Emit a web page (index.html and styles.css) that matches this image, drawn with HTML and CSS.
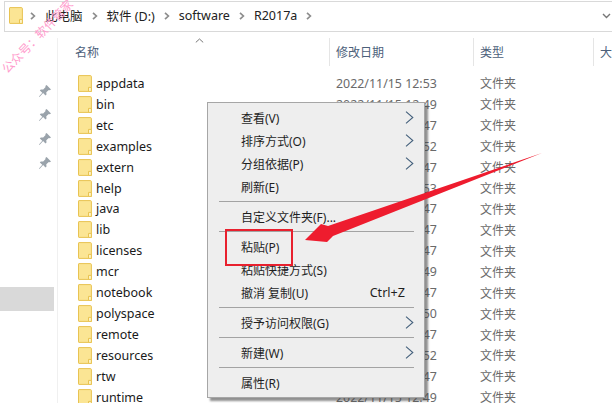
FILE: index.html
```html
<!DOCTYPE html>
<html lang="zh-CN">
<head>
<meta charset="utf-8">
<title>R2017a</title>
<link rel="stylesheet" href="styles.css">
</head>
<body>
<svg class="defs" width="0" height="0" aria-hidden="true">
  <symbol id="folder" viewBox="0 0 14 17">
    <path d="M1 .6h11.4c.6 0 1 .4 1 1V16.4H1c-.3 0-.5-.2-.5-.5V1.1c0-.3.2-.5.5-.5z" fill="#fbe594" stroke="#e8c352"/>
    <path d="M10.5 16.4v-4h2.9v4z" fill="#fdf3c6" stroke="#e8c352"/>
  </symbol>
  <symbol id="pin" viewBox="0 0 14 14">
    <path d="M8.6 1 13 5.4l-1.2.9-1-.4-2.5 2.4.2 2.3-1 1-2.4-2.6L1.5 13 1 12.5l3.3-3.7-2.5-2.4 1-1 2.4.2 2.4-2.5-.3-1z" fill="#9aa3ab"/>
  </symbol>
  <symbol id="crumb" viewBox="0 0 6 8">
    <path d="M1 .8 4.4 4 1 7.2" fill="none" stroke="#8d8d8d" stroke-width="1.7"/>
  </symbol>
  <symbol id="more" viewBox="0 0 9 13">
    <path d="M1 .7 7.8 6.5 1 12.3" fill="none" stroke="#44607c" stroke-width="1.1"/>
  </symbol>
</svg>

<div class="explorer">
  <nav class="address">
    <svg class="address-folder"><use href="#folder"/></svg>
    <svg class="crumb"><use href="#crumb"/></svg><span class="path">此电脑</span>
    <svg class="crumb"><use href="#crumb"/></svg><span class="path">软件 (D:)</span>
    <svg class="crumb"><use href="#crumb"/></svg><span class="path">software</span>
    <svg class="crumb"><use href="#crumb"/></svg><span class="path">R2017a</span>
    <svg class="crumb"><use href="#crumb"/></svg>
    <svg class="dropdown" viewBox="0 0 9 6"><path d="M1 1l3.5 3.5L8 1" fill="none" stroke="#777" stroke-width="1.4"/></svg>
  </nav>

  <div class="main">
    <aside class="sidebar">
      <div class="pins">
        <svg class="pin"><use href="#pin"/></svg>
        <svg class="pin"><use href="#pin"/></svg>
        <svg class="pin"><use href="#pin"/></svg>
        <svg class="pin"><use href="#pin"/></svg>
      </div>
      <div class="selected"></div>
    </aside>

    <section class="files">
      <header class="columns">
        <div class="col col-name">名称<svg class="sort" viewBox="0 0 9 5"><path d="M.8 4.4 4.5 1l3.7 3.4" fill="none" stroke="#777" stroke-width="1"/></svg></div>
        <div class="col col-date">修改日期</div>
        <div class="col col-type">类型</div>
        <div class="col col-size">大</div>
      </header>
      <ul class="rows">
        <li class="row"><svg class="icon"><use href="#folder"/></svg><span class="name">appdata</span><span class="date">2022/11/15 12:53</span><span class="meta">文件夹</span></li>
        <li class="row"><svg class="icon"><use href="#folder"/></svg><span class="name">bin</span><span class="date">2022/11/15 12:49</span><span class="meta">文件夹</span></li>
        <li class="row"><svg class="icon"><use href="#folder"/></svg><span class="name">etc</span><span class="date">2022/11/15 12:47</span><span class="meta">文件夹</span></li>
        <li class="row"><svg class="icon"><use href="#folder"/></svg><span class="name">examples</span><span class="date">2022/11/15 12:52</span><span class="meta">文件夹</span></li>
        <li class="row"><svg class="icon"><use href="#folder"/></svg><span class="name">extern</span><span class="date">2022/11/15 12:47</span><span class="meta">文件夹</span></li>
        <li class="row"><svg class="icon"><use href="#folder"/></svg><span class="name">help</span><span class="date">2022/11/15 12:53</span><span class="meta">文件夹</span></li>
        <li class="row"><svg class="icon"><use href="#folder"/></svg><span class="name">java</span><span class="date">2022/11/15 12:47</span><span class="meta">文件夹</span></li>
        <li class="row"><svg class="icon"><use href="#folder"/></svg><span class="name">lib</span><span class="date">2022/11/15 12:47</span><span class="meta">文件夹</span></li>
        <li class="row"><svg class="icon"><use href="#folder"/></svg><span class="name">licenses</span><span class="date">2022/11/15 12:47</span><span class="meta">文件夹</span></li>
        <li class="row"><svg class="icon"><use href="#folder"/></svg><span class="name">mcr</span><span class="date">2022/11/15 12:49</span><span class="meta">文件夹</span></li>
        <li class="row"><svg class="icon"><use href="#folder"/></svg><span class="name">notebook</span><span class="date">2022/11/15 12:47</span><span class="meta">文件夹</span></li>
        <li class="row"><svg class="icon"><use href="#folder"/></svg><span class="name">polyspace</span><span class="date">2022/11/15 12:50</span><span class="meta">文件夹</span></li>
        <li class="row"><svg class="icon"><use href="#folder"/></svg><span class="name">remote</span><span class="date">2022/11/15 12:47</span><span class="meta">文件夹</span></li>
        <li class="row"><svg class="icon"><use href="#folder"/></svg><span class="name">resources</span><span class="date">2022/11/15 12:52</span><span class="meta">文件夹</span></li>
        <li class="row"><svg class="icon"><use href="#folder"/></svg><span class="name">rtw</span><span class="date">2022/11/15 12:47</span><span class="meta">文件夹</span></li>
        <li class="row"><svg class="icon"><use href="#folder"/></svg><span class="name">runtime</span><span class="date">2022/11/15 12:49</span><span class="meta">文件夹</span></li>
      </ul>
    </section>
  </div>
</div>

<div class="menu">
  <div class="item"><span>查看(V)</span><svg class="more"><use href="#more"/></svg></div>
  <div class="item"><span>排序方式(O)</span><svg class="more"><use href="#more"/></svg></div>
  <div class="item"><span>分组依据(P)</span><svg class="more"><use href="#more"/></svg></div>
  <div class="item"><span>刷新(E)</span></div>
  <div class="sep"></div>
  <div class="item"><span>自定义文件夹(F)...</span></div>
  <div class="sep"></div>
  <div class="item"><span>粘贴(P)</span></div>
  <div class="item"><span>粘贴快捷方式(S)</span></div>
  <div class="item"><span>撤消 复制(U)</span><span class="shortcut">Ctrl+Z</span></div>
  <div class="sep"></div>
  <div class="item"><span>授予访问权限(G)</span><svg class="more"><use href="#more"/></svg></div>
  <div class="sep"></div>
  <div class="item"><span>新建(W)</span><svg class="more"><use href="#more"/></svg></div>
  <div class="sep"></div>
  <div class="item"><span>属性(R)</span></div>
</div>

<div class="highlight"></div>
<svg class="arrow" viewBox="0 0 612 403"><polygon points="542,153 328,226 321,224 305,240 327,242 333,236" fill="#ee1c2e"/></svg>
<div class="watermark">公众号：软件管家</div>
</body>
</html>
```

FILE: styles.css
```css
* {
  box-sizing: border-box;
}

html,
body {
  margin: 0;
  height: 100%;
  overflow: hidden;
  background: #fff;
}

body {
  position: relative;
  font-family: "Noto Sans", "Noto Sans CJK SC", sans-serif;
  font-size: 12px;
  color: #1a1a1a;
}

.defs {
  position: absolute;
}

ul {
  margin: 0;
  padding: 0;
  list-style: none;
}

.explorer {
  display: flex;
  flex-direction: column;
  height: 100%;
  padding-top: 1px;
}

/* Address bar */
.address {
  display: flex;
  align-items: center;
  flex: none;
  height: 31px;
  margin-left: 4px;
  padding: 0 0 2px 4px;
  border: 1px solid #d9d9d9;
  border-right: 0;
  font-size: 12.5px;
}

.address-folder {
  width: 14px;
  height: 17px;
  margin-right: -2px;
}

.crumb {
  width: 6px;
  height: 8px;
  margin: 0 9px;
}

.path {
  color: #222;
  white-space: nowrap;
}

.dropdown {
  width: 9px;
  height: 6px;
  margin-left: auto;
  margin-right: 1px;
}

/* Body */
.main {
  display: flex;
  flex: 1;
  min-height: 0;
  padding-top: 6px;
}

.sidebar {
  flex: none;
  width: 58px;
  border-right: 1px solid #f0f0f0;
}

.pins {
  display: flex;
  flex-direction: column;
  gap: 10px;
  padding: 46px 0 0 38px;
}

.pin {
  width: 14px;
  height: 14px;
}

.selected {
  width: 54px;
  height: 24px;
  margin-top: 117px;
  background: #d9d9d9;
}

.files {
  flex: 1;
  min-width: 0;
  overflow: hidden;
}

.columns {
  display: grid;
  grid-template-columns: 271px 144px 120px 1fr;
  height: 28px;
  color: #4c607a;
  font-size: 12px;
}

.col {
  position: relative;
  display: flex;
  align-items: center;
  padding-left: 7px;
  white-space: nowrap;
}

.col + .col {
  border-left: 1px solid #e5e5e5;
  padding-left: 6px;
}

.col-name {
  padding-left: 17px;
}

.sort {
  position: absolute;
  left: 137px;
  top: 0;
  width: 9px;
  height: 5px;
}

.rows {
  padding-top: 7px;
}

.row {
  display: grid;
  grid-template-columns: 18px 240px 144px 1fr;
  align-items: center;
  height: 20.93px;
  padding-left: 20px;
  white-space: nowrap;
}

.icon {
  width: 14px;
  height: 17px;
}

.name {
  color: #1a1a1a;
  font-size: 12.5px;
}

.date {
  color: #6a6a6a;
  font-size: 12.4px;
}

.meta {
  color: #6a6a6a;
}

/* Context menu */
.menu {
  position: absolute;
  left: 207px;
  top: 102px;
  width: 218px;
  padding: 3px 10px 3px 11px;
  background: #eeeeee;
  border: 1px solid #a6a6a6;
  box-shadow: 3px 3px 2px rgba(70, 70, 70, 0.6);
}

.item {
  display: flex;
  align-items: center;
  justify-content: space-between;
  height: 23px;
  padding-left: 22px;
  color: #1f1f1f;
  white-space: nowrap;
}

.shortcut {
  margin-right: 9px;
  font-size: 12.6px;
}

.more {
  width: 9px;
  height: 13px;
  flex: none;
}

.sep {
  height: 1px;
  margin: 3px 0;
  background: #a3a3a3;
}

/* Annotations */
.highlight {
  position: absolute;
  left: 225px;
  top: 229px;
  width: 68px;
  height: 37px;
  border: 2px solid #e8202e;
}

.arrow {
  position: absolute;
  left: 0;
  top: 0;
  width: 612px;
  height: 403px;
  pointer-events: none;
}

.watermark {
  position: absolute;
  left: -11px;
  top: 27px;
  font-size: 12px;
  color: #ff9ccd;
  white-space: nowrap;
  transform: rotate(-46deg);
}
```
